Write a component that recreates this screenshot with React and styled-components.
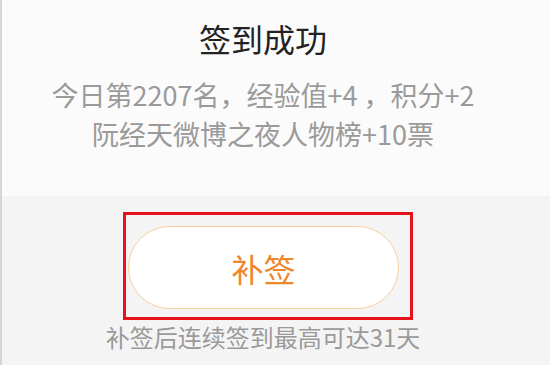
import styled, { createGlobalStyle } from "styled-components";

const GlobalStyle = createGlobalStyle`
  html, body {
    margin: 0;
    padding: 0;
    background: #f4f4f4;
  }
  body {
    font-family: "Noto Sans CJK SC", "Noto Sans", sans-serif;
  }
`;

const Page = styled.div`
  width: 550px;
  height: 365px;
  display: flex;
  flex-direction: column;
  border-left: 2px solid #d6d6d6;
  box-sizing: border-box;
  overflow: hidden;
`;

const Header = styled.div`
  height: 196px;
  background: #fbfbfb;
  display: flex;
  flex-direction: column;
  align-items: center;
  padding: 18px 26px 0 0;
  box-sizing: border-box;
`;

const Title = styled.h1`
  margin: 0;
  font-size: 32px;
  line-height: 40px;
  font-weight: 400;
  color: #222;
`;

const Info = styled.p`
  margin: 17px 0 0;
  font-size: 27px;
  line-height: 39px;
  color: #9a9a9a;
  text-align: center;
  white-space: nowrap;
`;

const Footer = styled.div`
  flex: 1;
  background: #f4f4f4;
  display: flex;
  flex-direction: column;
  padding: 16px 26px 0 0;
`;

const Highlight = styled.div`
  width: 290px;
  height: 108px;
  margin-left: 121px;
  border: 3px solid #e8131a;
  box-sizing: border-box;
  padding: 11px 0 0 2px;
`;

const PillButton = styled.button`
  width: 271px;
  height: 83px;
  border-radius: 42px;
  border: 1.5px solid #f6d09c;
  background: #fff;
  color: #f0862a;
  font-family: inherit;
  font-size: 32px;
  cursor: pointer;
  box-sizing: border-box;
`;

const Hint = styled.p`
  margin: 2px 0 0;
  font-size: 24px;
  line-height: 30px;
  color: #9a9a9a;
  text-align: center;
  white-space: nowrap;
`;

export default function App() {
  return (
    <>
      <GlobalStyle />
      <Page>
        <Header>
          <Title>签到成功</Title>
          <Info>
            今日第2207名，经验值+4 ，积分+2
            <br />
            阮经天微博之夜人物榜+10票
          </Info>
        </Header>
        <Footer>
          <Highlight>
            <PillButton>补签</PillButton>
          </Highlight>
          <Hint>补签后连续签到最高可达31天</Hint>
        </Footer>
      </Page>
    </>
  );
}
